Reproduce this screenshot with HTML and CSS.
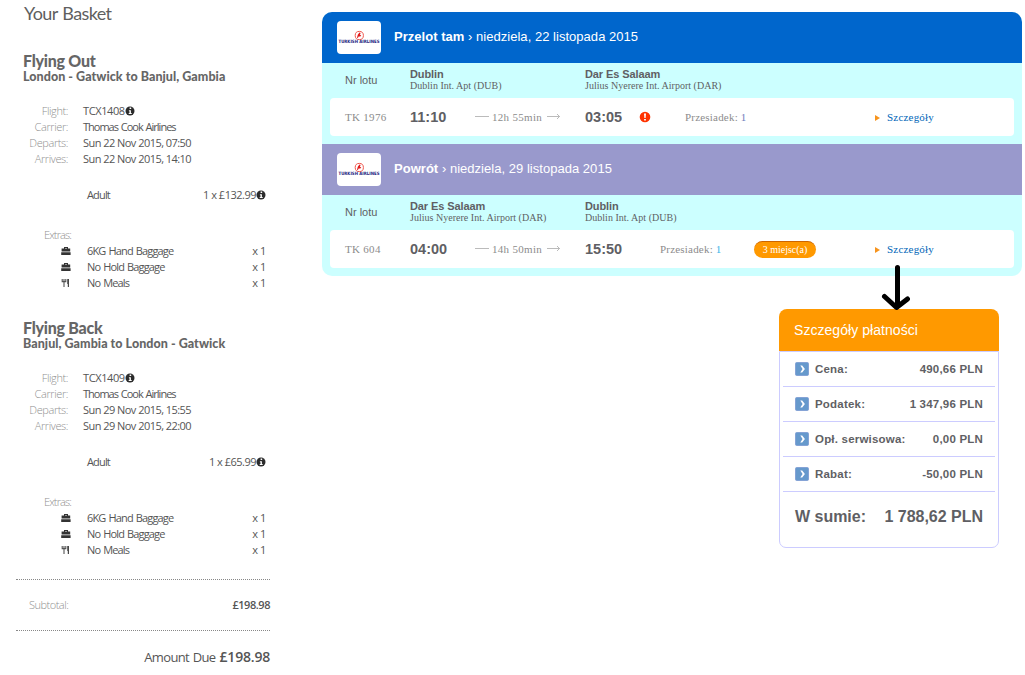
FILE: index.html
```html
<!DOCTYPE html>
<html lang="pl">
<head>
<meta charset="utf-8">
<title>Your Basket</title>
<link rel="stylesheet" href="styles.css">
</head>
<body>
<svg class="defs" width="0" height="0" aria-hidden="true">
  <symbol id="info" viewBox="0 0 10 10"><circle cx="5" cy="5" r="4.5" fill="#2b2b2b"/><path d="M4.6 1.6h1.6v1.5H4.6zM3.9 4.2h2v2.9h.8v1H3.7v-1h.8V5.2h-.6z" fill="#fff"/></symbol>
  <symbol id="bag" viewBox="0 0 10 10"><path d="M3 2.6V1h4v1.6h2.2v2.9H.6V2.6zM4 2.6h2V1.9H4zM.2 6.200h9.400v2.800H.2z" fill="#333"/></symbol>
  <symbol id="meal" viewBox="0 0 10 10"><path d="M1.2 1v2.600h3.600V1M3 1v8" fill="none" stroke="#555" stroke-width="1.100"/><path d="M6.300 1h1.600v8H6.800V6H6.300z" fill="#333"/></symbol>
  <symbol id="step" viewBox="0 0 14 14"><rect x=".5" y=".5" width="13" height="13" rx="1.200" fill="#69c" stroke="#85a3d6"/><path d="M5.300 3.500h1.900L9.900 7l-2.700 3.600H5.300L7.600 7z" fill="#fff"/></symbol>
</svg>
<div class="page">
  <section class="basket">
    <h1 class="basket-title"><span>Your Basket</span></h1>
    <div class="leg">
      <h2 class="leg-title">Flying Out</h2>
      <p class="leg-route">London - Gatwick to Banjul, Gambia</p>
      <dl class="facts">
        <dt>Flight:</dt><dd class="code">TCX1408<svg class="info"><use href="#info"/></svg></dd>
        <dt>Carrier:</dt><dd>Thomas Cook Airlines</dd>
        <dt>Departs:</dt><dd class="date">Sun 22 Nov 2015, 07:50</dd>
        <dt>Arrives:</dt><dd class="date">Sun 22 Nov 2015, 14:10</dd>
      </dl>
      <div class="fare"><span>Adult</span><span class="price">1 x £132.99<svg class="info"><use href="#info"/></svg></span></div>
      <div class="extras-label">Extras:</div>
      <ul class="extras">
        <li><svg class="glyph"><use href="#bag"/></svg><span>6KG Hand Baggage</span><b>x 1</b></li>
        <li><svg class="glyph"><use href="#bag"/></svg><span>No Hold Baggage</span><b>x 1</b></li>
        <li><svg class="glyph"><use href="#meal"/></svg><span>No Meals</span><b>x 1</b></li>
      </ul>
    </div>
    <div class="leg">
      <h2 class="leg-title">Flying Back</h2>
      <p class="leg-route">Banjul, Gambia to London - Gatwick</p>
      <dl class="facts">
        <dt>Flight:</dt><dd class="code">TCX1409<svg class="info"><use href="#info"/></svg></dd>
        <dt>Carrier:</dt><dd>Thomas Cook Airlines</dd>
        <dt>Departs:</dt><dd class="date">Sun 29 Nov 2015, 15:55</dd>
        <dt>Arrives:</dt><dd class="date">Sun 29 Nov 2015, 22:00</dd>
      </dl>
      <div class="fare"><span>Adult</span><span class="price">1 x £65.99<svg class="info"><use href="#info"/></svg></span></div>
      <div class="extras-label">Extras:</div>
      <ul class="extras">
        <li><svg class="glyph"><use href="#bag"/></svg><span>6KG Hand Baggage</span><b>x 1</b></li>
        <li><svg class="glyph"><use href="#bag"/></svg><span>No Hold Baggage</span><b>x 1</b></li>
        <li><svg class="glyph"><use href="#meal"/></svg><span>No Meals</span><b>x 1</b></li>
      </ul>
    </div>
    <div class="subtotal"><span>Subtotal:</span><strong>£198.98</strong></div>
    <div class="due"><span>Amount Due</span><strong>£198.98</strong></div>
  </section>

  <main class="results">
    <section class="tickets">
      <header class="bar bar-out">
        <svg class="logo" viewBox="0 0 44 33"><circle cx="22.300" cy="14.500" r="4.100" fill="none" stroke="#f0564c"/><path d="M20 16.800l.8-3 1.600-2.400 1.300.5-.9 1.700 1.500 1.100-1.200.8-1.500-.1-.7 1.500z" fill="#e01818"/><text class="airline-name" x="1.500" y="22" textLength="41" lengthAdjust="spacingAndGlyphs">TURKISH AIRLINES</text></svg>
        <p><strong>Przelot tam</strong> › niedziela, 22 listopada 2015</p>
      </header>
      <div class="cols">
        <span class="nr">Nr lotu</span>
        <div class="port"><strong>Dublin</strong><span>Dublin Int. Apt (DUB)</span></div>
        <div class="port"><strong>Dar Es Salaam</strong><span>Julius Nyerere Int. Airport (DAR)</span></div>
      </div>
      <div class="flight">
        <span class="num">TK 1976</span>
        <strong class="time">11:10</strong>
        <span class="duration"><svg class="dash" viewBox="0 0 14 8"><path d="M0 3.500h14"/></svg><span>12h 55min</span><svg class="dash end" viewBox="0 0 14 8"><path d="M0 3.500h13M10 1l2.500 2.500L10 6"/></svg></span>
        <span class="arrive"><strong class="time">03:05</strong><svg class="alert" viewBox="0 0 12 12"><circle cx="6" cy="6" r="5.300" fill="#f30"/><path d="M5 2.500h2L6.600 7H5.400zM5.100 7.900h1.800v1.500H5.100z" fill="#fff"/></svg></span>
        <span class="stops">Przesiadek: <b>1</b></span>
        <span class="seats"></span>
        <a class="more"><i class="tri"></i>Szczegóły</a>
      </div>
      <header class="bar bar-back">
        <svg class="logo" viewBox="0 0 44 33"><circle cx="22.300" cy="14.500" r="4.100" fill="none" stroke="#f0564c"/><path d="M20 16.800l.8-3 1.600-2.400 1.300.5-.9 1.700 1.500 1.100-1.200.8-1.500-.1-.7 1.500z" fill="#e01818"/><text class="airline-name" x="1.500" y="22" textLength="41" lengthAdjust="spacingAndGlyphs">TURKISH AIRLINES</text></svg>
        <p><strong>Powrót</strong> › niedziela, 29 listopada 2015</p>
      </header>
      <div class="cols">
        <span class="nr">Nr lotu</span>
        <div class="port"><strong>Dar Es Salaam</strong><span>Julius Nyerere Int. Airport (DAR)</span></div>
        <div class="port"><strong>Dublin</strong><span>Dublin Int. Apt (DUB)</span></div>
      </div>
      <div class="flight no-alert">
        <span class="num">TK 604</span>
        <strong class="time">04:00</strong>
        <span class="duration"><svg class="dash" viewBox="0 0 14 8"><path d="M0 3.500h14"/></svg><span>14h 50min</span><svg class="dash end" viewBox="0 0 14 8"><path d="M0 3.500h13M10 1l2.500 2.500L10 6"/></svg></span>
        <span class="arrive"><strong class="time">15:50</strong></span>
        <span class="stops">Przesiadek: <b class="bright">1</b></span>
        <span class="seats"><em>3 miejsc(a)</em></span>
        <a class="more"><i class="tri"></i>Szczegóły</a>
      </div>
    </section>

    <section class="payment">
      <svg class="pointer" viewBox="0 0 30 48"><path d="M17.500 3.500V41M4.500 32.500L16.500 43.500l11-8.500" fill="none" stroke="#000" stroke-width="5" stroke-linecap="round" stroke-linejoin="round"/></svg>
      <h2 class="pay-title">Szczegóły płatności</h2>
      <div class="pay-body">
        <div class="line"><svg class="step"><use href="#step"/></svg><span>Cena:</span><b>490,66 PLN</b></div>
        <div class="line"><svg class="step"><use href="#step"/></svg><span>Podatek:</span><b>1 347,96 PLN</b></div>
        <div class="line"><svg class="step"><use href="#step"/></svg><span>Opł. serwisowa:</span><b>0,00 PLN</b></div>
        <div class="line"><svg class="step"><use href="#step"/></svg><span>Rabat:</span><b>-50,00 PLN</b></div>
        <div class="total"><span>W sumie:</span><b>1 788,62 PLN</b></div>
      </div>
    </section>
  </main>
</div>
</body>
</html>
```
FILE: styles.css
```css
* { box-sizing: border-box; margin: 0; padding: 0; }
body { width: 1025px; height: 675px; overflow: hidden; background: #fff; font-family: "Liberation Sans", Arial, sans-serif; color: #5f5f64; }
.defs { position: absolute; }
.page { display: flex; height: 675px; }

.basket { width: 322px; padding: 4px 52px 0 16px; font: 11px/16px "Open Sans", sans-serif; letter-spacing: -0.85px; word-spacing: 1px; color: #555; flex: none; }
.basket-title { height: 47px; padding-left: 8px; font: 400 18px/19px Lato, sans-serif; letter-spacing: -0.6px; color: #5f5f5f; }
.leg { height: 267px; padding-left: 7px; }
.leg-title { font: 900 16px/19px Lato, sans-serif; letter-spacing: -0.25px; word-spacing: 0; color: #666; }
.leg-route { height: 33px; font: 900 12.5px/14px Lato, sans-serif; letter-spacing: 0.05px; word-spacing: 0; color: #666; white-space: nowrap; }
.facts { display: grid; grid-template-columns: 45px 1fr; column-gap: 15px; }
.facts dt { text-align: right; font-weight: 300; letter-spacing: -0.4px; color: #909090; }
.facts dd { white-space: nowrap; letter-spacing: -1px; }
.facts .code { letter-spacing: -0.4px; }
.facts .date { letter-spacing: -0.54px; word-spacing: 0; }
.info { width: 10px; height: 10px; vertical-align: -1px; }
.fare { display: flex; justify-content: space-between; margin-top: 20px; padding: 0 4px 0 64px; }
.price { letter-spacing: -0.5px; word-spacing: 0; }
.extras-label { margin-top: 24px; padding-left: 21px; font-weight: 300; color: #909090; }
.extras { list-style: none; }
.extras li { display: grid; grid-template-columns: 10px 1fr auto; column-gap: 16px; padding: 0 4px 0 38px; }
.extras b { font-weight: 400; letter-spacing: -0.4px; word-spacing: 0; }
.glyph { width: 10px; height: 10px; margin-top: 3px; }
.subtotal { display: flex; justify-content: space-between; align-items: center; height: 52px; margin-top: -6px; padding-left: 13px; border-top: 1px dotted #888; border-bottom: 1px dotted #888; letter-spacing: -0.45px; color: #909090; }
.subtotal span { font-weight: 300; letter-spacing: -0.5px; }
.subtotal strong { font-weight: 600; color: #555; }
.due { display: flex; justify-content: flex-end; gap: 4px; padding-top: 17px; font-size: 13px; line-height: 18px; letter-spacing: -0.65px; }
.due strong { font-size: 14px; font-weight: 600; letter-spacing: -0.2px; }

.results { width: 700px; padding-top: 12px; }
.tickets { height: 264px; overflow: hidden; border-radius: 10px; background: #cff; }
.bar { display: flex; align-items: center; gap: 13px; height: 51px; padding-left: 15px; color: #fff; font-size: 13px; }
.bar p { padding-bottom: 2px; letter-spacing: 0.03px; }
.bar-out { background: #06c; }
.bar-back { background: #99c; margin-top: 8px; }
.logo { width: 44px; height: 33px; border-radius: 4px; background: #fff; }
.airline-name { font: 900 4.5px "DejaVu Sans", sans-serif; fill: #22227e; }
.cols { display: grid; grid-template-columns: 65px 175px 1fr; height: 35px; padding-left: 23px; font-size: 11px; }
.nr { line-height: 35px; }
.port { display: flex; flex-direction: column; padding-top: 6px; line-height: 11px; }
.port strong { letter-spacing: -0.1px; }
.port span { font: 10px/11px "Liberation Serif", serif; letter-spacing: 0.02px; }
.flight { display: grid; grid-template-columns: 65px 65px 110px 100px 69px 121px 1fr; align-items: center; height: 38px; margin: 0 8px; padding-left: 15px; border-radius: 4px; background: #fff; font: 11px/38px "Liberation Serif", serif; letter-spacing: 0.3px; color: #8c8c8c; white-space: nowrap; }
.no-alert { grid-template-columns: 65px 65px 110px 75px 94px 121px 1fr; }
.time { font: bold 14.5px/38px "Liberation Sans", Arial, sans-serif; letter-spacing: 0; color: #5f5f64; }
.duration { display: flex; align-items: center; gap: 3px; }
.dash { width: 14px; height: 8px; fill: none; stroke: #bbb; }
.end { margin-left: 2px; }
.arrive { display: flex; align-items: center; gap: 17px; }
.alert { width: 12px; height: 12px; margin-top: -1px; }
.stops b { font-weight: 400; color: #6f7dbb; }
.stops .bright { color: #39b5e8; }
.stops, .more { letter-spacing: 0.2px; }
.seats em { display: block; width: 62px; height: 17px; border-top: 1px solid #c60; border-radius: 9px; background: #f90; color: #fff; font: 10px/15px "Liberation Serif", serif; letter-spacing: 0; text-align: center; }
.more { display: flex; align-items: center; gap: 7px; color: #0066b8; }
.tri { margin-top: 1px; border-left: 5px solid #f7941d; border-top: 3px solid transparent; border-bottom: 3px solid transparent; }

.payment { position: relative; width: 220px; margin: 33px 0 0 457px; }
.pointer { position: absolute; left: 101px; top: -45px; width: 30px; height: 48px; }
.pay-title { height: 42px; padding-left: 15px; border-radius: 8px 8px 0 0; background: #f90; color: #fff; font-size: 14px; font-weight: 400; line-height: 42px; letter-spacing: 0.05px; }
.pay-body { height: 197px; padding: 0 3px; border: 1px solid #ccf; border-radius: 0 0 7px 7px; }
.line { display: grid; grid-template-columns: 14px 1fr auto; column-gap: 6px; align-items: center; height: 35px; padding: 0 12px; border-bottom: 1px solid #ccf; font-size: 11.5px; font-weight: bold; letter-spacing: 0.2px; }
.step { width: 14px; height: 14px; }
.total { display: flex; justify-content: space-between; padding: 0 12px; font-size: 16px; font-weight: bold; line-height: 49px; letter-spacing: -0.02px; }
```
